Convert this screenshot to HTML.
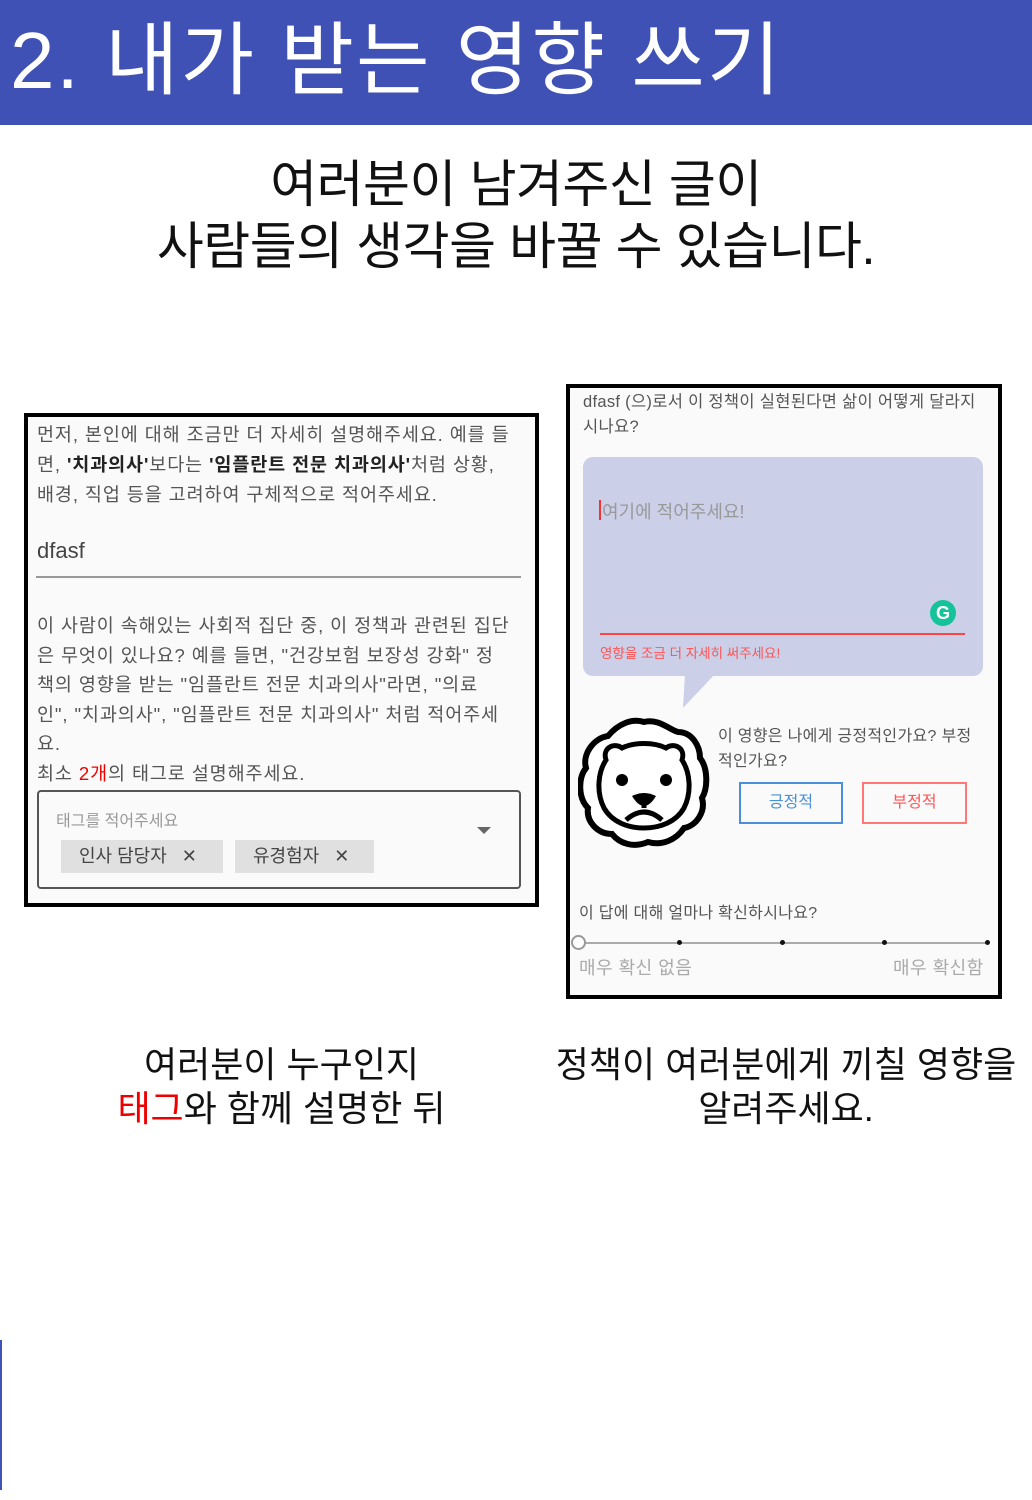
<!DOCTYPE html>
<html><head><meta charset="utf-8"><style>
*{margin:0;padding:0;box-sizing:border-box}
body{width:1032px;height:1500px;background:#fff;position:relative;overflow:hidden;font-family:"Liberation Sans","Noto Sans CJK KR",sans-serif}
.a{position:absolute;white-space:nowrap}
.g{color:#555}
</style></head><body>
<div class="a" style="left:0;top:0;width:1032px;height:125px;background:#3f51b5"></div>
<div class="a" style="left:10px;top:6px;font-size:80px;color:#fff;line-height:110px;letter-spacing:2px">2. 내가 받는 영향 쓰기</div>
<div class="a" style="left:0;top:154px;width:1032px;text-align:center;font-size:51px;line-height:62px;color:#111;letter-spacing:-0.5px">여러분이 남겨주신 글이<br>사람들의 생각을 바꿀 수 있습니다.</div>

<!-- left box -->
<div class="a" style="left:24px;top:413px;width:515px;height:494px;border:4px solid #000;background:#fafafa"></div>
<div class="a g" style="left:37px;top:420px;font-size:18.5px;line-height:30px;letter-spacing:0.9px">먼저, 본인에 대해 조금만 더 자세히 설명해주세요. 예를 들<br>면, <b style="color:#222">'치과의사'</b>보다는 <b style="color:#222">'임플란트 전문 치과의사'</b>처럼 상황,<br>배경, 직업 등을 고려하여 구체적으로 적어주세요.</div>
<div class="a" style="left:37px;top:538px;font-size:22px;color:#444">dfasf</div>
<div class="a" style="left:36px;top:576px;width:485px;height:2px;background:#999"></div>
<div class="a g" style="left:37px;top:611px;font-size:18.5px;line-height:29.5px;letter-spacing:0.9px">이 사람이 속해있는 사회적 집단 중, 이 정책과 관련된 집단<br>은 무엇이 있나요? 예를 들면, "건강보험 보장성 강화" 정<br>책의 영향을 받는 "임플란트 전문 치과의사"라면, "의료<br>인", "치과의사", "임플란트 전문 치과의사" 처럼 적어주세<br>요.<br>최소 <span style="color:#e00">2개</span>의 태그로 설명해주세요.</div>
<div class="a" style="left:37px;top:790px;width:484px;height:99px;border:2px solid #555;border-radius:4px"></div>
<div class="a" style="left:56px;top:807px;font-size:16px;color:#999">태그를 적어주세요</div>
<div class="a" style="left:477px;top:827px;width:0;height:0;border-left:7px solid transparent;border-right:7px solid transparent;border-top:7px solid #666"></div>
<div class="a" style="left:61px;top:840px;width:162px;height:33px;background:#e0e0e0;font-size:18px;color:#444;line-height:33px;padding-left:18px">인사 담당자 &nbsp;&nbsp;✕</div>
<div class="a" style="left:235px;top:840px;width:139px;height:33px;background:#e0e0e0;font-size:18px;color:#444;line-height:33px;padding-left:18px">유경험자 &nbsp;&nbsp;✕</div>

<!-- right box -->
<div class="a" style="left:566px;top:384px;width:436px;height:615px;border:4px solid #000;background:#fafafa"></div>
<div class="a g" style="left:583px;top:390px;font-size:16.5px;line-height:25px;letter-spacing:0.3px">dfasf (으)로서 이 정책이 실현된다면 삶이 어떻게 달라지<br>시나요?</div>
<div class="a" style="left:583px;top:457px;width:400px;height:219px;background:#cbcfe8;border-radius:10px"></div>
<svg class="a" style="left:680px;top:674px" width="40" height="36"><polygon points="5,0 35,0 3,34" fill="#cbcfe8"/></svg>
<div class="a" style="left:599px;top:500px;width:2px;height:20px;background:#e33"></div>
<div class="a" style="left:602px;top:498px;font-size:18px;color:#999">여기에 적어주세요!</div>
<div class="a" style="left:930px;top:600px;width:26px;height:26px;border-radius:50%;background:#15c39a;color:#fff;font-size:18px;line-height:26px;text-align:center;font-weight:bold">G</div>
<div class="a" style="left:600px;top:633px;width:365px;height:2px;background:#f44"></div>
<div class="a" style="left:600px;top:642px;font-size:13.5px;color:#f55">영향을 조금 더 자세히 써주세요!</div>
<svg class="a" style="left:578px;top:716px" width="132" height="135" viewBox="0 0 132 135">
<path d="M66 6 C80 2 92 14 100 16 C114 16 122 30 122 42 C130 52 130 72 124 82 C128 96 118 110 106 112 C98 124 84 130 70 126 C56 132 42 128 34 118 C20 118 8 106 10 92 C0 82 0 62 8 52 C4 38 16 22 30 20 C40 8 54 2 66 6 Z" fill="#fff" stroke="#000" stroke-width="6"/>
<path d="M28 44 C24 32 36 26 44 32 C56 26 76 26 88 32 C96 26 108 32 104 44 C112 56 114 76 106 92 C98 106 82 112 66 112 C50 112 34 106 26 92 C18 76 20 56 28 44 Z" fill="#fff" stroke="#000" stroke-width="5"/>
<circle cx="44" cy="64" r="6"/><circle cx="88" cy="64" r="6"/>
<path d="M54 80 Q66 74 78 80 Q72 90 66 90 Q60 90 54 80Z"/>
<path d="M66 88 L66 92 M48 104 Q66 88 84 104" stroke="#000" stroke-width="5" fill="none"/>
</svg>
<div class="a g" style="left:718px;top:724px;font-size:16px;line-height:25px;letter-spacing:0.3px">이 영향은 나에게 긍정적인가요? 부정<br>적인가요?</div>
<div class="a" style="left:739px;top:782px;width:104px;height:42px;border:2px solid #4a90d9;color:#4a90d9;font-size:16px;text-align:center;line-height:38px">긍정적</div>
<div class="a" style="left:862px;top:782px;width:105px;height:42px;border:2px solid #f77;color:#f55;font-size:16px;text-align:center;line-height:38px">부정적</div>
<div class="a g" style="left:579px;top:899px;font-size:16px;letter-spacing:0.3px">이 답에 대해 얼마나 확신하시나요?</div>
<div class="a" style="left:580px;top:942px;width:408px;height:2px;background:#aaa"></div>
<div class="a" style="left:571px;top:935px;width:15px;height:15px;border:2px solid #999;border-radius:50%;background:#fff"></div>
<div class="a" style="left:677px;top:940px;width:5px;height:5px;border-radius:50%;background:#111"></div>
<div class="a" style="left:780px;top:940px;width:5px;height:5px;border-radius:50%;background:#111"></div>
<div class="a" style="left:882px;top:940px;width:5px;height:5px;border-radius:50%;background:#111"></div>
<div class="a" style="left:985px;top:940px;width:5px;height:5px;border-radius:50%;background:#111"></div>
<div class="a" style="left:579px;top:954px;font-size:18px;color:#aaa;letter-spacing:0.5px">매우 확신 없음</div>
<div class="a" style="left:893px;top:954px;font-size:18px;color:#aaa;letter-spacing:0.5px">매우 확신함</div>

<div class="a" style="left:0;top:1043px;width:563px;text-align:center;font-size:36px;line-height:44px;color:#111">여러분이 누구인지<br><span style="color:#e00">태그</span>와 함께 설명한 뒤</div>
<div class="a" style="left:540px;top:1043px;width:492px;text-align:center;font-size:36px;line-height:44px;color:#111">정책이 여러분에게 끼칠 영향을<br>알려주세요.</div>
<div class="a" style="left:0;top:1340px;width:2px;height:150px;background:#3f51b5"></div>
</body></html>
